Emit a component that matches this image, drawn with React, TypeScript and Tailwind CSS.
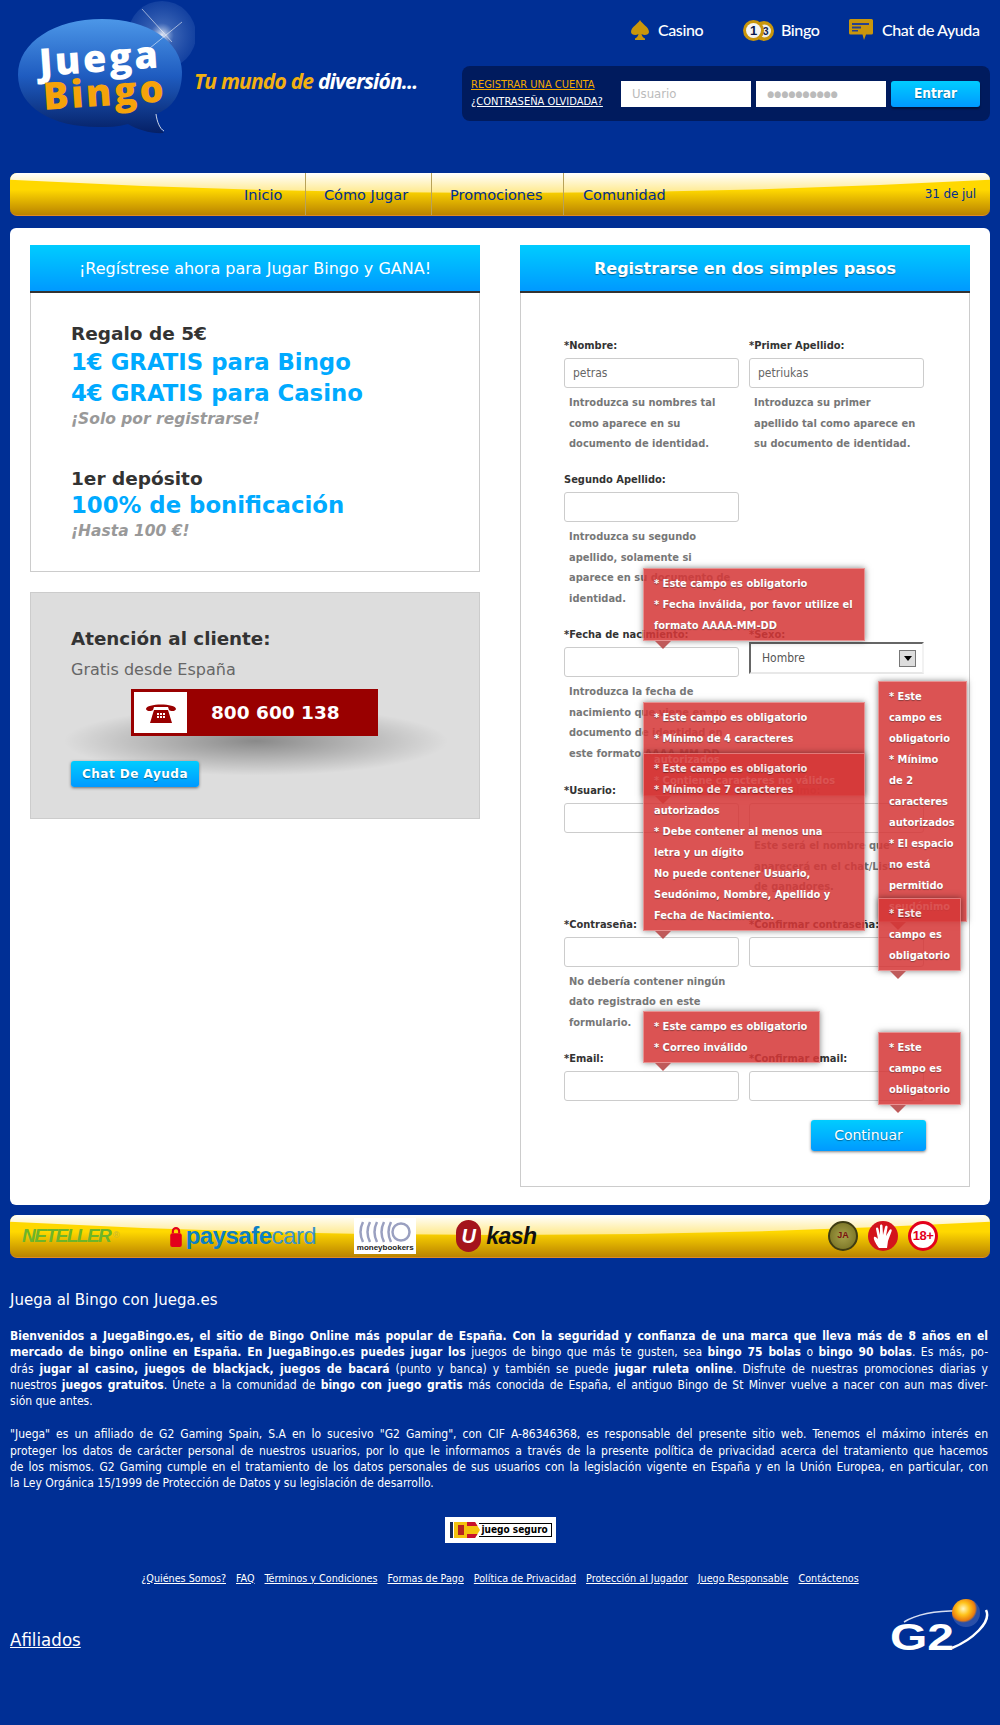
import React from 'react';

const topGradient = 'bg-gradient-to-b from-[#00ccff] to-[#0099ff]';

type Seg = string | { b: string };

const para1: Seg[][] = [
    [{ b: 'Bienvenidos a JuegaBingo.es, el sitio de Bingo Online más popular de España. Con la seguridad y confianza de una marca que lleva más de 8 años en el' }],
    [{ b: 'mercado de bingo online en España. En JuegaBingo.es puedes jugar los' }, ' juegos de bingo que más te gusten, sea ', { b: 'bingo 75 bolas' }, ' o ', { b: 'bingo 90 bolas' }, '. Es más, po-'],
    ['drás ', { b: 'jugar al casino, juegos de blackjack, juegos de bacará' }, ' (punto y banca) y también se puede ', { b: 'jugar ruleta online' }, '. Disfrute de nuestras promociones diarias y'],
    ['nuestros ', { b: 'juegos gratuitos' }, '. Únete a la comunidad de ', { b: 'bingo con juego gratis' }, ' más conocida de España, el antiguo Bingo de St Minver vuelve a nacer con aun mas diver-'],
];

const para2: string[] = [
    '"Juega" es un afiliado de G2 Gaming Spain, S.A en lo sucesivo "G2 Gaming", con CIF A-86346368, es responsable del presente sitio web. Tenemos el máximo interés en',
    'proteger los datos de carácter personal de nuestros usuarios, por lo que le informamos a través de la presente política de privacidad acerca del tratamiento que hacemos',
    'de los mismos. G2 Gaming cumple en el tratamiento de los datos personales de sus usuarios con la legislación vigente en España y en la Unión Europea, en particular, con',
];

const footerLinks = ['¿Quiénes Somos?', 'FAQ', 'Términos y Condiciones', 'Formas de Pago', 'Política de Privacidad', 'Protección al Jugador', 'Juego Responsable', 'Contáctenos'];

// red validation bubbles, coordinates are relative to the form box
const bubbles: { left: string; top: string; width: string; lines: string[] }[] = [
    { left: 'left-[123px]', top: 'top-[323px]', width: 'w-[222px]', lines: ['* Este campo es obligatorio', '* Fecha inválida, por favor utilize el', 'formato AAAA-MM-DD'] },
    { left: 'left-[123px]', top: 'top-[457px]', width: 'w-[222px]', lines: ['* Este campo es obligatorio', '* Mínimo de 4 caracteres', 'autorizados', '* Contiene caracteres no válidos'] },
    { left: 'left-[123px]', top: 'top-[508px]', width: 'w-[222px]', lines: ['* Este campo es obligatorio', '* Mínimo de 7 caracteres', 'autorizados', '* Debe contener al menos una', 'letra y un dígito', 'No puede contener Usuario,', 'Seudónimo, Nombre, Apellido y', 'Fecha de Nacimiento.'] },
    { left: 'left-[358px]', top: 'top-[436px]', width: 'w-[89px]', lines: ['* Este', 'campo es', 'obligatorio', '* Mínimo', 'de 2', 'caracteres', 'autorizados', '* El espacio', 'no está', 'permitido', 'seudónimo'] },
    { left: 'left-[358px]', top: 'top-[653px]', width: 'w-[83px]', lines: ['* Este', 'campo es', 'obligatorio'] },
    { left: 'left-[123px]', top: 'top-[766px]', width: 'w-[177px]', lines: ['* Este campo es obligatorio', '* Correo inválido'] },
    { left: 'left-[358px]', top: 'top-[787px]', width: 'w-[83px]', lines: ['* Este', 'campo es', 'obligatorio'] },
];

const Logo = () => (
    <svg width="195" height="140" viewBox="0 0 195 140" className="shrink-0">
        <defs>
            <linearGradient id="bubble" x1="0" y1="0" x2="0" y2="1">
                <stop offset="0" stopColor="#4c97e8" />
                <stop offset="0.5" stopColor="#1f5cc0" />
                <stop offset="1" stopColor="#052066" />
            </linearGradient>
            <radialGradient id="glow">
                <stop offset="0" stopColor="#ffffff" stopOpacity="0.9" />
                <stop offset="0.35" stopColor="#9fc0ee" stopOpacity="0.35" />
                <stop offset="1" stopColor="#7fa5e0" stopOpacity="0.15" />
            </radialGradient>
        </defs>
        <circle cx="162" cy="35" r="34" fill="url(#glow)" />
        <path d="M18 75 C18 42 55 19 102 19 C148 19 182 42 182 72 C182 95 172 108 156 114 C157 122 160 129 164 133 C152 134 138 130 128 124 C118 127 108 127 98 127 C52 127 18 107 18 75 Z" fill="url(#bubble)" />
        <path d="M156 114 C157 122 160 129 164 131" fill="none" stroke="#fff" strokeWidth="0.8" />
        <path d="M142 9 L172 42 M182 22 L150 48" stroke="#fff" strokeWidth="0.8" opacity="0.7" />
        <text x="40" y="76" transform="rotate(-4 40 76)" fontFamily="'Open Sans', sans-serif" fontWeight="800" fontSize="38" letterSpacing="2.5" fill="#ffffff">Juega</text>
        <text x="44" y="110" transform="rotate(-4 44 110)" fontFamily="'Open Sans', sans-serif" fontWeight="800" fontSize="38" letterSpacing="2.5" fill="#f5a30a">Bingo</text>
    </svg>
);

const SpadeIcon = () => (
    <svg width="18" height="20" viewBox="0 0 18 20">
        <path d="M9 0 C11 4 18 7 18 12 C18 15 13 16 10.5 14 C11 16 12 18 14 18.5 L14 20 L4 20 L4 18.5 C6 18 7 16 7.5 14 C5 16 0 15 0 12 C0 7 7 4 9 0 Z" fill="#c9960c" />
    </svg>
);

const BallsIcon = () => (
    <svg width="31" height="21" viewBox="0 0 31 21">
        <circle cx="21" cy="11" r="10" fill="#c9960c" />
        <circle cx="21.5" cy="11" r="6.5" fill="#eee" />
        <circle cx="10.5" cy="10.5" r="10.5" fill="#c9960c" />
        <circle cx="10.5" cy="10.5" r="7.5" fill="#f4f4f4" />
        <text x="10.5" y="15" textAnchor="middle" fontFamily="'Liberation Sans', sans-serif" fontWeight="700" fontSize="13" fill="#0a1a50">1</text>
        <text x="22.5" y="15" textAnchor="middle" fontFamily="'Liberation Sans', sans-serif" fontWeight="700" fontSize="10" fill="#0a1a50">3</text>
    </svg>
);

const ChatIcon = () => (
    <svg width="24" height="22" viewBox="0 0 24 22">
        <path d="M1.5 0 H22.5 Q24 0 24 1.5 V14 Q24 15.5 22.5 15.5 H17 L15 21 L13.5 15.5 H1.5 Q0 15.5 0 14 V1.5 Q0 0 1.5 0 Z" fill="#c9960c" />
        <rect x="3" y="4" width="17" height="2" fill="#27408f" />
        <rect x="3" y="7.5" width="9" height="2" fill="#27408f" />
        <rect x="3" y="11" width="6" height="1.5" fill="#27408f" />
    </svg>
);

const PhoneIcon = () => (
    <svg width="32" height="22" viewBox="0 0 32 22">
        <path d="M1 7 C1 1 31 1 31 7 C31 9 26 10 24 8 L23 5 L9 5 L8 8 C6 10 1 9 1 7 Z" fill="#990000" />
        <path d="M9 8 H23 L27 21 H5 Z" fill="#990000" />
        <g fill="#fff">
            <rect x="12" y="11" width="2" height="2" />
            <rect x="15" y="11" width="2" height="2" />
            <rect x="18" y="11" width="2" height="2" />
            <rect x="12" y="14" width="2" height="2" />
            <rect x="15" y="14" width="2" height="2" />
            <rect x="18" y="14" width="2" height="2" />
        </g>
    </svg>
);

// yellow glossy strip used for the nav and the payment logos
const GlossBar: React.FC<{ className: string; children: React.ReactNode }> = ({ className, children }) => (
    <div className={`relative mx-[10px] rounded-[7px] overflow-hidden border-b border-[#e08a22] bg-gradient-to-b from-[#ffd800] from-40% to-[#b98300] ${className}`}>
        <svg className="absolute inset-0 w-full h-full" viewBox="0 0 980 43" preserveAspectRatio="none">
            <defs>
                <linearGradient id="gloss" x1="0" y1="0" x2="0" y2="1">
                    <stop offset="0" stopColor="#ffffff" />
                    <stop offset="1" stopColor="#ffe98a" />
                </linearGradient>
            </defs>
            <path d="M0 0 H980 V7 Q490 34 0 7 Z" fill="url(#gloss)" />
        </svg>
        <div className="relative h-full">{children}</div>
    </div>
);

const Bubble: React.FC<{ left: string; top: string; width: string; lines: string[] }> = ({ left, top, width, lines }) => (
    <div className={`absolute ${left} ${top} ${width} opacity-[0.86]`}>
        <div className="bg-[#d63737] border border-[#e58080] shadow-[0_0_6px_rgba(0,0,0,0.55)] px-[10px] py-[4px] text-white text-[11px] leading-[21px] font-bold whitespace-nowrap [text-shadow:0_1px_1px_rgba(0,0,0,0.45)]">
            {lines.map((l, i) => (
                <div key={i}>{l}</div>
            ))}
        </div>
        <svg width="16" height="8" viewBox="0 0 16 8" className="ml-[12px]">
            <polygon points="0,0 16,0 8,8" fill="#b54040" />
        </svg>
    </div>
);

const Help: React.FC<{ children: React.ReactNode }> = ({ children }) => (
    <p className="mt-[5px] pl-[5px] text-[11px] leading-[20.5px] font-bold text-[#777777]">{children}</p>
);

const Field: React.FC<{ label: string; value?: string; help?: React.ReactNode }> = ({ label, value, help }) => (
    <div>
        <label className="block h-[18px] mb-[3px] text-[11px] leading-[18px] font-bold text-[#333333] whitespace-nowrap">{label}</label>
        <input
            readOnly
            value={value ?? ''}
            className="block w-[175px] h-[30px] border border-[#cccccc] rounded-[3px] bg-white px-[8px] text-[12px] text-[#666666] outline-none"
        />
        {help && <Help>{help}</Help>}
    </div>
);

export default function App() {
    return (
        <div className="min-h-[1725px] bg-[#002f95] text-white font-['DejaVu_Sans_Condensed','DejaVu_Sans',sans-serif] overflow-hidden">
            {/* header */}
            <header className="h-[173px] flex justify-between">
                <div className="flex">
                    <Logo />
                    <div className="mt-[66px] -ml-[1px] text-[21px] font-bold italic tracking-[-0.8px] font-['Open_Sans',sans-serif] whitespace-nowrap h-[30px] leading-[30px]">
                        <span className="text-[#f2b010]">Tu mundo de </span>
                        <span className="text-white">diversión...</span>
                    </div>
                </div>
                <div className="w-[538px] mr-[10px] pt-[18px]">
                    <div className="flex justify-end items-center pr-[12px] h-[24px] text-[16px] tracking-[-0.4px] font-['Lato',sans-serif] font-medium">
                        <SpadeIcon />
                        <span className="ml-[9px] w-[44px] whitespace-nowrap">Casino</span>
                        <span className="ml-[41px]"><BallsIcon /></span>
                        <span className="ml-[7px] w-[38px] whitespace-nowrap">Bingo</span>
                        <span className="ml-[30px]"><ChatIcon /></span>
                        <span className="ml-[9px] w-[96px] whitespace-nowrap">Chat de Ayuda</span>
                    </div>
                    <div className="mt-[24px] ml-[10px] h-[55px] rounded-[8px] bg-[#001b5e] flex items-center pl-[9px] pr-[10px]">
                        <div className="w-[150px] -mt-[2px] text-[11px] leading-[17px] whitespace-nowrap">
                            <a className="text-[#f2a900] underline block">REGISTRAR UNA CUENTA</a>
                            <a className="text-white underline block">¿CONTRASEÑA OLVIDADA?</a>
                        </div>
                        <input readOnly placeholder="Usuario" className="w-[130px] h-[26px] bg-white px-[11px] text-[13px] placeholder:text-[#bbbbbb] outline-none" />
                        <input readOnly placeholder="●●●●●●●●●●" className="ml-[5px] w-[130px] h-[26px] bg-white px-[11px] text-[9px] placeholder:text-[#bbbbbb] outline-none" />
                        <button className={`ml-[5px] w-[89px] h-[26px] rounded-[3px] ${topGradient} text-white text-[13.5px] font-bold shadow-[0_2px_2px_rgba(0,0,0,0.4)] [text-shadow:0_1px_1px_rgba(0,0,0,0.4)]`}>Entrar</button>
                    </div>
                </div>
            </header>

            {/* nav */}
            <GlossBar className="h-[43px]">
                <nav className="flex h-full pl-[234px] text-[14.5px] text-[#002e8f] font-['DejaVu_Sans',sans-serif]">
                    <a className="w-[62px] flex items-center pt-[3px] border-r border-[#b8a25a]">Inicio</a>
                    <a className="w-[126px] pl-[18px] flex items-center pt-[3px] border-r border-[#b8a25a]">Cómo Jugar</a>
                    <a className="w-[132px] pl-[18px] flex items-center pt-[3px] border-r border-[#b8a25a]">Promociones</a>
                    <a className="pl-[19px] flex items-center pt-[3px]">Comunidad</a>
                    <span className="ml-auto pr-[14px] flex items-center text-[12px] tracking-[-0.1px] pb-[1px] font-['DejaVu_Sans',sans-serif]">31 de jul</span>
                </nav>
            </GlossBar>

            {/* main white panel */}
            <main className="mx-[10px] mt-[12px] h-[977px] rounded-[6px] bg-white px-[20px] pt-[17px] flex justify-between text-[#333333]">
                <div className="w-[450px]">
                    <h2 className={`h-[48px] flex items-center justify-center pt-[1px] ${topGradient} border-b-2 border-[#333333] text-white text-[16px] font-normal font-['DejaVu_Sans',sans-serif]`}>¡Regístrese ahora para Jugar Bingo y GANA!</h2>
                    <div className="h-[279px] border border-t-0 border-[#cccccc] pl-[40px] pt-[28px] font-['DejaVu_Sans',sans-serif] whitespace-nowrap">
                        <p className="text-[18.5px] leading-[26px] font-bold">Regalo de 5€</p>
                        <p className="text-[22.8px] leading-[31px] font-bold text-[#00aaff]">1€ GRATIS para Bingo</p>
                        <p className="text-[22.8px] leading-[31px] font-bold text-[#00aaff]">4€ GRATIS para Casino</p>
                        <p className="text-[15.5px] leading-[20px] font-bold italic text-[#999999]">¡Solo por registrarse!</p>
                        <p className="mt-[37px] text-[18.5px] leading-[26px] font-bold">1er depósito</p>
                        <p className="text-[22.8px] leading-[27px] font-bold text-[#00aaff]">100% de bonificación</p>
                        <p className="text-[15.5px] leading-[24px] font-bold italic text-[#999999]">¡Hasta 100 €!</p>
                    </div>
                    <div className="relative mt-[20px] h-[227px] bg-[#dddddd] border border-[#cccccc] pl-[40px] pt-[33px] font-['DejaVu_Sans',sans-serif]">
                        <div className="absolute left-[25px] top-[112px] w-[400px] h-[72px] bg-[radial-gradient(ellipse_at_center,rgba(0,0,0,0.38),rgba(0,0,0,0)_68%)]" />
                        <h3 className="relative text-[18.3px] leading-[26px] font-bold">Atención al cliente:</h3>
                        <p className="relative mt-[7px] text-[16px] leading-[22px] text-[#666666]">Gratis desde España</p>
                        <div className="relative mt-[8px] ml-[60px] w-[247px] h-[47px] border-[3px] border-[#990000] bg-[#990000] flex items-center">
                            <div className="w-[53px] h-full bg-white flex items-center justify-center"><PhoneIcon /></div>
                            <span className="ml-[24px] text-[18.5px] font-bold text-white whitespace-nowrap">800 600 138</span>
                        </div>
                        <button className={`relative mt-[25px] w-[128px] h-[26px] rounded-[3px] ${topGradient} text-white text-[12px] font-bold tracking-[0.5px] shadow-[0_1px_3px_rgba(0,0,0,0.5)] [text-shadow:0_1px_1px_rgba(0,0,0,0.4)]`}>Chat De Ayuda</button>
                    </div>
                </div>

                <div className="relative w-[450px]">
                    <h2 className={`h-[48px] flex items-center justify-center pt-[1px] ${topGradient} border-b-2 border-[#333333] text-white text-[16px] font-bold font-['DejaVu_Sans',sans-serif] [text-shadow:0_1px_1px_rgba(0,0,0,0.4)]`}>Registrarse en dos simples pasos</h2>
                    <div className="h-[894px] border border-t-0 border-[#cccccc] pl-[43px] pt-[44px]">
                        <div className="grid grid-cols-[175px_175px] gap-x-[10px]">
                            <Field label="*Nombre:" value="petras" help={<>Introduzca su nombres tal<br />como aparece en su<br />documento de identidad.</>} />
                            <Field label="*Primer Apellido:" value="petriukas" help={<>Introduzca su primer<br />apellido tal como aparece en<br />su documento de identidad.</>} />
                        </div>
                        <div className="mt-[16.5px]">
                            <Field label="Segundo Apellido:" help={<>Introduzca su segundo<br />apellido, solamente si<br />aparece en su documento de<br />identidad.</>} />
                        </div>
                        <div className="mt-[17px] grid grid-cols-[175px_175px] gap-x-[10px]">
                            <Field label="*Fecha de nacimiento:" help={<>Introduzca la fecha de<br />nacimiento que viene en su<br />documento de identidad en<br />este formato AAAA-MM-DD</>} />
                            <div>
                                <label className="block h-[18px] -mb-[2px] text-[11px] leading-[18px] font-bold text-[#333333]">*Sexo:</label>
                                <div className="h-[32px] w-[175px] border-2 border-t-[#666666] border-l-[#666666] border-r-[#f2f2f2] border-b-[#e8e8e8] flex items-center justify-between pl-[11px] pr-[6px] text-[12px] text-[#555555]">
                                    Hombre
                                    <span className="w-[17px] h-[17px] bg-[#dddddd] border border-[#777777] flex items-center justify-center">
                                        <span className="border-x-[4px] border-x-transparent border-t-[5px] border-t-black" />
                                    </span>
                                </div>
                            </div>
                        </div>
                        <div className="mt-[18px] grid grid-cols-[175px_175px] gap-x-[10px]">
                            <Field label="*Usuario:" />
                            <Field label="*Seudónimo:" help={<span className="block -mt-[2px] whitespace-nowrap">Este será el nombre que<br />aparecerá en el chat/Lista<br />de ganadores.</span>} />
                        </div>
                        <div className="mt-[18px] grid grid-cols-[175px_175px] gap-x-[10px]">
                            <Field label="*Contraseña:" help={<>No debería contener ningún<br />dato registrado en este<br />formulario.</>} />
                            <Field label="*Confirmar contraseña:" />
                        </div>
                        <div className="mt-[17px] grid grid-cols-[175px_175px] gap-x-[10px]">
                            <Field label="*Email:" />
                            <Field label="*Confirmar email:" />
                        </div>
                        <button className={`block mt-[19px] ml-[247px] w-[115px] h-[31px] rounded-[3px] ${topGradient} text-white text-[14px] font-['DejaVu_Sans',sans-serif] shadow-[0_1px_3px_rgba(0,0,0,0.5)] [text-shadow:0_1px_1px_rgba(0,0,0,0.4)]`}>Continuar</button>
                    </div>
                    {bubbles.map((b, i) => (
                        <Bubble key={i} {...b} />
                    ))}
                </div>
            </main>

            {/* payment logos */}
            <GlossBar className="mt-[10px] h-[43px]">
                <div className="relative h-full flex items-center font-['Liberation_Sans',sans-serif]">
                    <span className="ml-[12px] w-[88px] text-[19px] font-bold italic text-[#6db52a] tracking-[-1.5px] whitespace-nowrap">NETELLER</span>
                    <span className="ml-[3px] text-[9px] text-[#c4b53a]">®</span>
                    <svg width="12" height="21" viewBox="0 0 11 20" className="ml-[50px]">
                        <path d="M2.5 7 V5 a3 3 0 0 1 6 0 V7" fill="none" stroke="#e3001b" strokeWidth="2" />
                        <rect x="0" y="7" width="11" height="13" rx="2" fill="#e3001b" />
                    </svg>
                    <span className="ml-[4px] text-[24px] leading-none whitespace-nowrap tracking-[-0.5px] text-[#0a7fc4]">
                        <span className="font-bold">paysafe</span>
                        <span className="font-normal text-[#3a93c8]">card</span>
                    </span>
                    <div className="ml-[38px] w-[62px] h-[36px] bg-white flex flex-col items-center justify-end pb-[1px]">
                        <svg width="56" height="22" viewBox="0 0 56 22" fill="none" stroke="#9aa0c0" strokeWidth="2.5">
                            <circle cx="44" cy="11" r="8.5" />
                            <path d="M6 1 Q1 11 6 21 M13 1 Q8 11 13 21 M20 1 Q15 11 20 21 M27 1 Q22 11 27 21 M34 1 Q29 11 34 21" />
                        </svg>
                        <span className="text-[8px] leading-[10px] font-bold text-[#222222]">moneybookers</span>
                    </div>
                    <span className="ml-[40px] w-[25px] h-[32px] rounded-full bg-[#a4141c] flex items-center justify-center text-white font-bold italic text-[20px]">U</span>
                    <span className="ml-[5px] text-[23px] font-bold italic text-[#111111] tracking-[-0.5px]">kash</span>
                    <div className="ml-auto mr-[52px] flex gap-[10px]">
                        <span className="w-[30px] h-[30px] rounded-full bg-[radial-gradient(circle,#a8a24a,#6f6a1e)] border-2 border-[#3f3c12] flex items-center justify-center text-[9px] font-bold text-[#7a1010]">JA</span>
                        <span className="w-[30px] h-[30px] rounded-full bg-[#d3141c] flex items-center justify-center">
                            <svg width="20" height="24" viewBox="0 0 20 24" fill="#fff">
                                <path d="M6 24 C3 20 0 15 1 13 C2 12 4 14 5 15 L3 5 C3 3 5 3 5.5 5 L7 11 L7 2 C7 0 9.5 0 9.5 2 L10 11 L12 3 C12.5 1 15 1.5 14.5 3.5 L13 12 L16.5 6 C17.5 4.5 19.5 5.5 18.5 7.5 L15 17 L14 24 Z" />
                            </svg>
                        </span>
                        <span className="w-[30px] h-[30px] rounded-full bg-white border-[3px] border-[#e3001b] flex items-center justify-center text-[13px] font-bold text-[#e3001b] tracking-[-0.5px]">18+</span>
                    </div>
                </div>
            </GlossBar>

            {/* seo text */}
            <section className="mt-[33px] mx-[10px] text-[12px] leading-[16.3px]">
                <h4 className="text-[15px] leading-[18px] font-normal font-['DejaVu_Sans',sans-serif]">Juega al Bingo con Juega.es</h4>
                <div className="mt-[19px] w-[978px]">
                    {para1.map((line, i) => (
                        <div key={i} className="text-justify [text-align-last:justify] whitespace-nowrap">
                            {line.map((s, j) => (typeof s === 'string' ? <span key={j}>{s}</span> : <b key={j}>{s.b}</b>))}
                        </div>
                    ))}
                    <div>sión que antes.</div>
                </div>
                <div className="mt-[17px] w-[978px]">
                    {para2.map((line, i) => (
                        <div key={i} className="text-justify [text-align-last:justify] whitespace-nowrap">{line}</div>
                    ))}
                    <div>la Ley Orgánica 15/1999 de Protección de Datos y su legislación de desarrollo.</div>
                </div>
            </section>

            <div className="mt-[25px] flex justify-center">
                <div className="w-[111px] h-[26px] bg-white flex items-center pl-[5px]">
                    <svg width="30" height="16" viewBox="0 0 30 16" className="shrink-0">
                        <rect x="0" y="0" width="3" height="16" fill="#1a2a55" />
                        <rect x="4" y="0" width="13" height="16" fill="#f4c20d" />
                        <rect x="8" y="3" width="6" height="10" fill="#b5231f" />
                        <polygon points="17,0 25,0 30,8 25,16 17,16" fill="#f4c20d" />
                        <polygon points="17,0 25,0 27.5,4 17,4" fill="#c8102e" />
                        <polygon points="17,12 27.5,12 25,16 17,16" fill="#c8102e" />
                    </svg>
                    <span className="-ml-[1px] px-[3px] h-[14px] border border-l-0 border-black text-[10px] leading-[12px] font-bold text-black whitespace-nowrap font-['DejaVu_Sans_Condensed',sans-serif]">juego seguro</span>
                </div>
            </div>

            <nav className="mt-[29px] flex justify-center gap-[10px] text-[10.7px] leading-[14px] whitespace-nowrap">
                {footerLinks.map((l) => (
                    <a key={l} className="underline">{l}</a>
                ))}
            </nav>

            <div className="mt-[12px] mx-[10px] flex justify-between items-end">
                <a className="text-[18.5px] leading-[22px] underline mb-[1px]">Afiliados</a>
                <svg width="100" height="54" viewBox="0 0 100 54">
                    <defs>
                        <radialGradient id="sun" cx="0.4" cy="0.35">
                            <stop offset="0" stopColor="#fff6c0" />
                            <stop offset="0.45" stopColor="#ffc21a" />
                            <stop offset="0.85" stopColor="#e87a10" />
                            <stop offset="1" stopColor="#2a4fa8" />
                        </radialGradient>
                    </defs>
                    <path d="M14 24 C30 14 55 12 80 13" fill="none" stroke="#d6def2" strokeWidth="1.5" />
                    <path d="M62 50 C82 42 102 24 96 12" fill="none" stroke="#ffffff" strokeWidth="2.5" />
                    <text x="0" y="52" fontFamily="'Liberation Sans', sans-serif" fontWeight="700" fontSize="37" textLength="64" lengthAdjust="spacingAndGlyphs" fill="#ffffff">G2</text>
                    <circle cx="76" cy="15" r="14" fill="url(#sun)" />
                </svg>
            </div>
        </div>
    );
}
